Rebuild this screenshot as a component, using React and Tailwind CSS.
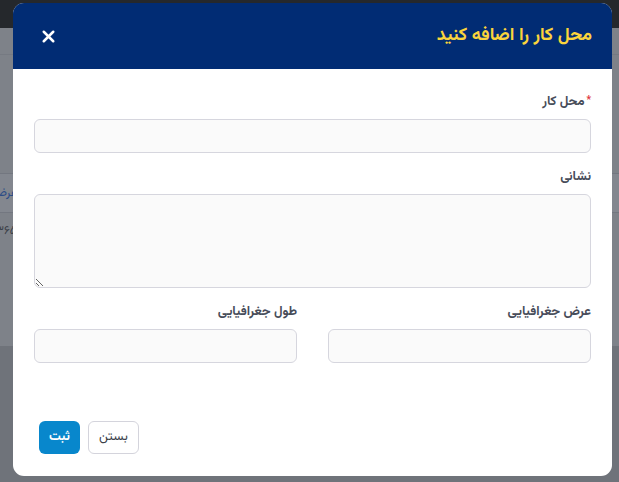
import { X } from "lucide-react";

const font = {
  fontFamily: "'Vazirmatn', 'Noto Sans Arabic', 'DejaVu Sans', sans-serif",
};

const Field = ({ label, required, children, className = "" }) => (
  <div className={className}>
    <label className="flex h-5 items-center gap-0.5 text-[13px] font-bold text-[#474c59]">
      {required && <span className="-mt-1.5 text-[10px] text-[#e0333a]">*</span>}
      {label}
    </label>
    <div className="mt-1.5">{children}</div>
  </div>
);

const inputCls =
  "block w-full rounded-md border border-[#d6d6de] bg-[#fafafa] px-3 text-[13px] outline-none";

const App = () => {
  return (
    <div
      className="relative h-[482px] w-[619px] overflow-hidden bg-[#6f737a]"
      style={font}
    >
      {/* page behind the overlay */}
      <div className="flex flex-col">
        <div className="h-[28px] bg-[#25282c]" />
        <div className="h-[318px] bg-[#7e8289]">
          <div className="h-[27px] border-b border-[#767a82]" />
          <div className="h-[118px]" />
          <div className="flex h-[40px] items-center border-y border-[#737780] bg-[#83878f] text-[12px] text-[#2c4c86]">
            <span className="-ml-2">عرض</span>
          </div>
          <div className="flex h-[36px] items-center text-[12px] text-[#3b3f47]">
            <span className="-ml-1">۳۶۵</span>
          </div>
        </div>
      </div>

      {/* modal */}
      <div
        dir="rtl"
        className="absolute left-[13px] top-[3px] flex h-[473px] w-[599px] flex-col rounded-[11px] bg-white"
      >
        <div className="flex h-[66px] items-center justify-between rounded-t-[11px] bg-[#012c74] pl-[26px] pr-[20px]">
          <h2 className="text-[18px] font-bold text-[#fad43c]">
            محل کار را اضافه کنید
          </h2>
          <button className="text-white">
            <X size={19} strokeWidth={3.2} />
          </button>
        </div>

        <div className="px-[21px] pt-6">
          <Field label="محل کار" required>
            <input className={`${inputCls} h-[34px]`} />
          </Field>
          <Field label="نشانی" className="mt-[15px]">
            <textarea className={`${inputCls} h-[94px] py-2`} />
          </Field>
          <div className="mt-[15px] grid grid-cols-2 gap-[31px]">
            <Field label="عرض جغرافیایی">
              <input className={`${inputCls} h-[34px]`} />
            </Field>
            <Field label="طول جغرافیایی">
              <input className={`${inputCls} h-[34px]`} />
            </Field>
          </div>
        </div>

        <div className="mt-auto flex justify-end gap-2 pb-[22px] pl-[26px]">
          <button className="h-[33px] w-[51px] rounded-md border border-[#d4d4dc] bg-white text-[13px] text-[#3b3f4a]">
            بستن
          </button>
          <button className="h-[33px] w-[41px] rounded-md bg-[#0887cc] text-[13px] font-bold text-white">
            ثبت
          </button>
        </div>
      </div>
    </div>
  );
};

export default App;
